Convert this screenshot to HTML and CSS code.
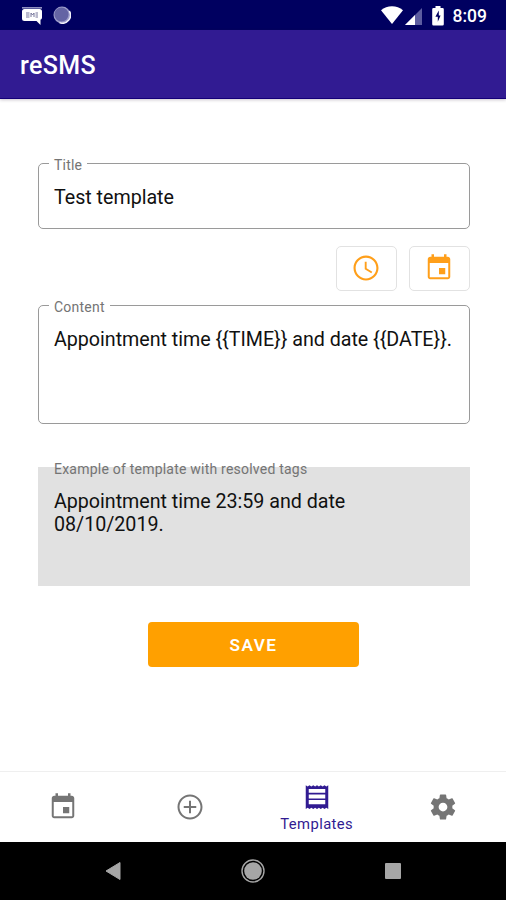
FILE: index.html
```html
<!DOCTYPE html>
<html lang="en">
<head>
<meta charset="utf-8">
<title>reSMS</title>
<link rel="stylesheet" href="styles.css">
</head>
<body>
<div class="status">
  <div class="status-group">
    <svg class="notif-sms" width="22" height="20" viewBox="0 0 22 20"><path d="M1 1.200h20v1.300H1z" fill="#b4b4d8"/><path d="M3.500 3h15A2.500 2.500 0 0 1 21 5.500v6a2.500 2.500 0 0 1-1.500 2.300V19l-4-4h-12A2.500 2.500 0 0 1 1 12.500v-7A2.500 2.500 0 0 1 3.500 3z" fill="#fff"/><path d="M5 7h3.500M5 9h3.500M5 11h3.500M10 11V7l1.500 2L13 7v4M14.500 7H17M14.500 9H17M14.500 11H17" stroke="#77779c" stroke-width="1" fill="none"/></svg>
    <svg class="notif-sync" width="18" height="18" viewBox="0 0 18 18"><circle cx="9" cy="9" r="8.500" fill="#9c9cca"/><path d="M16.300 5A8 8 0 0 1 6.500 16.600" fill="none" stroke="#f0f0fa" stroke-width="1.500"/><circle cx="8.500" cy="8.500" r="7" fill="#6464a4"/></svg>
  </div>
  <div class="status-group">
    <svg class="wifi" width="22" height="18" viewBox="0 0 22 18"><path d="M11 18L0 4.300C3 1.700 7 .3 11 .3s8 1.400 11 4z" fill="#fff"/></svg>
    <svg class="signal" width="17" height="17" viewBox="0 0 17 17"><path d="M17 0v17H0z" fill="#5c5ca0"/><path d="M10 7v10H0z" fill="#fff"/></svg>
    <svg class="battery" width="12" height="20" viewBox="0 0 12 20"><path d="M3.500 0h5v2H10.500a1.300 1.300 0 0 1 1.300 1.300v15a1.300 1.300 0 0 1-1.300 1.300h-9A1.300 1.300 0 0 1 .2 18.300v-15A1.300 1.300 0 0 1 1.500 2h2z" fill="#fff"/><path d="M6.800 4.500L3.400 10.800h2.400v5L8.600 9.500H6.800z" fill="#000060"/></svg>
    <span class="clock">8:09</span>
  </div>
</div>
<header class="appbar"><h1>reSMS</h1></header>
<main class="form">
  <div class="field field-title"><span class="label label-title">Title</span><span class="value">Test template</span></div>
  <div class="tags">
    <button class="tag"><svg class="icon" viewBox="0 0 24 24"><path d="M11.990 2C6.470 2 2 6.480 2 12s4.470 10 9.990 10C17.520 22 22 17.520 22 12S17.520 2 11.990 2zM12 20.300c-4.600 0-8.300-3.700-8.300-8.300S7.400 3.700 12 3.700s8.300 3.700 8.300 8.300-3.700 8.300-8.300 8.300zM12.500 7H11v6l5.250 3.150.75-1.230-4.500-2.670z"/></svg></button>
    <button class="tag"><svg class="icon" viewBox="0 0 24 24"><path d="M17 12h-5v5h5v-5zM16 1v2H8V1H6v2H5c-1.110 0-1.990.9-1.990 2L3 19c0 1.100.89 2 2 2h14c1.100 0 2-.9 2-2V5c0-1.100-.9-2-2-2h-1V1h-2zm3.400 18.400H4.600V8h14.800v11.400z"/></svg></button>
  </div>
  <div class="field field-content"><span class="label">Content</span><span class="value">Appointment time {{TIME}} and date {{DATE}}.</span></div>
  <div class="preview"><span class="label label-preview">Example of template with resolved tags</span><span class="value">Appointment time 23:59 and date<br>08/10/2019.</span></div>
  <button class="save">SAVE</button>
</main>
<nav class="tabs">
  <div class="tab"><svg class="icon" viewBox="0 0 24 24"><path d="M17 12h-5v5h5v-5zM16 1v2H8V1H6v2H5c-1.110 0-1.990.9-1.990 2L3 19c0 1.100.89 2 2 2h14c1.100 0 2-.9 2-2V5c0-1.100-.9-2-2-2h-1V1h-2zm3.400 18.400H4.600V8h14.800v11.400z"/></svg></div>
  <div class="tab"><svg class="icon" viewBox="0 0 24 24"><path d="M12.800 7h-1.600v4.200H7v1.600h4.200V17h1.600v-4.200H17v-1.600h-4.200V7zM12 2C6.480 2 2 6.480 2 12s4.480 10 10 10 10-4.480 10-10S17.520 2 12 2zm0 18.400c-4.600 0-8.400-3.800-8.400-8.400S7.400 3.600 12 3.600s8.400 3.800 8.400 8.400-3.800 8.400-8.400 8.400z"/></svg></div>
  <div class="tab tab-active"><svg class="icon" viewBox="0 0 24 24"><path d="M3 21.500l1.500-1 1.500 1 1.500-1 1.500 1 1.500-1 1.500 1 1.500-1 1.500 1 1.500-1 1.500 1 1.500-1 1.500 1v-19l-1.500 1-1.500-1-1.500 1-1.500-1-1.500 1-1.500-1-1.500 1-1.500-1-1.500 1-1.500-1-1.500 1-1.500-1z"/><path class="lines" d="M5.400 5.600h13.200v3H5.400zM5.400 9.900h13.200v3.200H5.400zM5.400 14.400h13.200v3.400H5.400z"/></svg><span>Templates</span></div>
  <div class="tab"><svg class="icon" viewBox="0 0 24 24"><path d="M19.430 12.980c.04-.32.070-.64.070-.98s-.03-.66-.07-.98l2.110-1.650c.19-.15.24-.42.12-.64l-2-3.460c-.12-.22-.39-.3-.61-.22l-2.490 1c-.52-.4-1.080-.73-1.690-.98l-.38-2.650C14.460 2.180 14.250 2 14 2h-4c-.25 0-.46.18-.49.42l-.38 2.650c-.61.25-1.170.59-1.690.98l-2.490-1c-.23-.09-.49 0-.61.22l-2 3.460c-.13.22-.07.49.12.64l2.110 1.650c-.04.32-.07.65-.07.98s.03.66.07.98l-2.110 1.650c-.19.15-.24.42-.12.64l2 3.460c.12.22.39.3.61.22l2.490-1c.52.4 1.080.73 1.690.98l.38 2.650c.03.24.24.42.49.42h4c.25 0 .46-.18.49-.42l.38-2.650c.61-.25 1.170-.59 1.690-.98l2.490 1c.23.09.49 0 .61-.22l2-3.460c.12-.22.07-.49-.12-.64l-2.110-1.650zM12 15.500c-1.930 0-3.500-1.570-3.500-3.500s1.570-3.500 3.500-3.500 3.500 1.570 3.500 3.500-1.570 3.500-3.500 3.500z"/></svg></div>
</nav>
<footer class="system">
  <svg width="16" height="20" viewBox="0 0 16 20"><path d="M15 1.500v17L1 10z" fill="#a6a6a6" stroke="#a6a6a6" stroke-linejoin="round"/></svg>
  <svg width="24" height="24" viewBox="0 0 24 24"><circle cx="12" cy="12" r="11" fill="none" stroke="#a6a6a6" stroke-width="1.400"/><circle cx="12" cy="12" r="8.800" fill="#a6a6a6"/></svg>
  <svg width="16" height="16" viewBox="0 0 16 16"><rect width="16" height="16" rx="1" fill="#a6a6a6"/></svg>
</footer>
</body>
</html>
```

FILE: styles.css
```css
* { box-sizing: border-box; }
body {
  margin: 0;
  height: 900px;
  display: flex;
  flex-direction: column;
  overflow: hidden;
  background: #fff;
  font-family: Roboto, "Liberation Sans", sans-serif;
  color: #111;
}
button { font: inherit; padding: 0; }
svg { display: block; flex: none; }
.status {
  flex: none;
  height: 30px;
  display: flex;
  justify-content: space-between;
  padding: 0 19px 0 21px;
  background: #000060;
  color: #fff;
}
.status-group { display: flex; align-items: flex-start; }
.notif-sms { margin-top: 6px; }
.notif-sync { margin: 6px 0 0 10px; }
.wifi { margin: 6px 2px 0 0; }
.signal { margin: 8px 10px 0 0; }
.battery { margin: 6px 9px 0 0; }
.clock { font-size: 17.500px; font-weight: 500; line-height: 32px; }
.appbar {
  flex: none;
  height: 69px;
  padding: 0 20px;
  background: #311b92;
  border-bottom: 1px solid #140078;
  box-shadow: 0 1px 3px rgba(49, 27, 60, .25);
}
.appbar h1 {
  margin: 0;
  font-size: 25px;
  font-weight: 500;
  line-height: 72px;
  letter-spacing: .4px;
  color: #fff;
}
.form { flex: 1; padding: 64px 36px 0 38px; }
.field {
  position: relative;
  border: 1px solid #9a9a9a;
  border-radius: 5px;
  padding: 22px 15px;
}
.field-title { height: 66px; }
.field-content { height: 119px; margin-top: 14px; }
.label {
  position: absolute;
  top: -7px;
  left: 10px;
  padding: 0 5px;
  background: #fff;
  font-size: 14px;
  line-height: 16px;
  letter-spacing: .22px;
  color: #747474;
  white-space: nowrap;
}
.value {
  display: block;
  font-size: 19.700px;
  line-height: 23px;
  letter-spacing: -.03px;
  white-space: nowrap;
}
.tags { display: flex; justify-content: flex-end; gap: 12px; margin-top: 17px; }
.tag {
  width: 61px;
  height: 45px;
  display: flex;
  align-items: center;
  justify-content: center;
  padding: 0 1px 1px 0;
  border: 1px solid #e2e2e2;
  border-radius: 5px;
  background: #fff;
}
.icon { width: 30px; height: 30px; fill: #757575; }
.tag .icon { fill: #ff9f1a; }
.preview {
  position: relative;
  height: 119px;
  margin-top: 43px;
  padding: 23px 16px;
  background: #e1e1e1;
}
.label-preview { top: -6px; left: 11px; background: none; }
.save {
  display: block;
  width: 211px;
  height: 45px;
  margin: 36px auto 0 110px;
  border: 0;
  border-radius: 4px;
  background: #ffa000;
  color: #fff;
  font-size: 17.200px;
  font-weight: 600;
  letter-spacing: 1.500px;
}
.tabs {
  flex: none;
  height: 71px;
  display: grid;
  grid-template-columns: repeat(4, 1fr);
  border-top: 1px solid #efefef;
}
.tab { display: flex; flex-direction: column; align-items: center; justify-content: center; }
.tab-active {
  justify-content: flex-start;
  padding: 10px 0 0 1px;
  font-size: 14.800px;
  line-height: 18px;
  color: #311b92;
}
.tab-active span { margin-top: 3px; letter-spacing: .4px; }
.tab-active .icon { fill: #311b92; }
.tab-active .lines { fill: #fff; }
.system {
  flex: none;
  height: 58px;
  display: flex;
  align-items: center;
  justify-content: space-between;
  padding: 0 105px;
  background: #000;
}
```
